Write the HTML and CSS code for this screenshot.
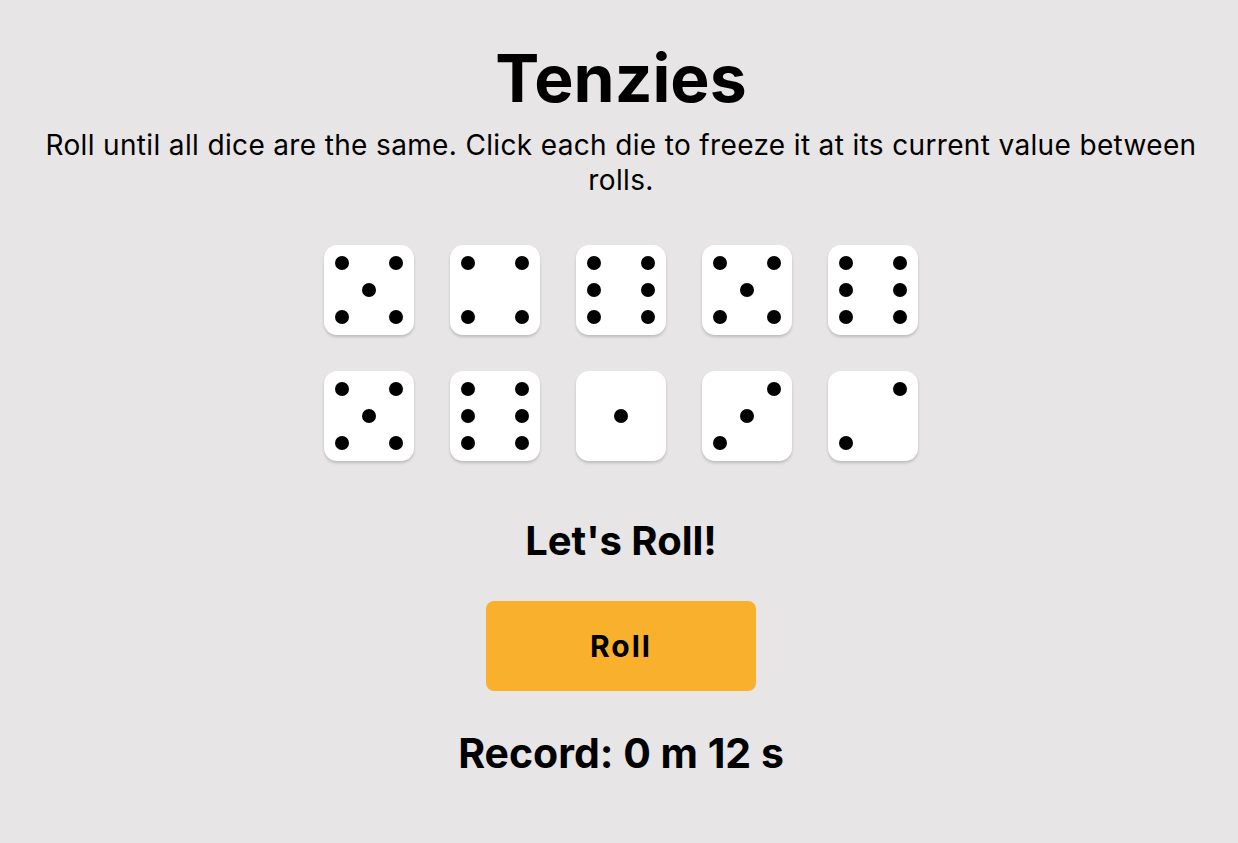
FILE: index.html
```html
<!DOCTYPE html>
<html>
<head>
<meta charset="utf-8">
<link rel="stylesheet" href="styles.css">
</head>
<body>
<main class="app">
  <h1 class="title">Tenzies</h1>
  <p class="instructions">Roll until all dice are the same. Click each die to freeze it at its current value between rolls.</p>
  <div class="dice">
    <div class="die"><span class="pip tl"></span><span class="pip tr"></span><span class="pip c"></span><span class="pip bl"></span><span class="pip br"></span></div>
    <div class="die"><span class="pip tl"></span><span class="pip tr"></span><span class="pip bl"></span><span class="pip br"></span></div>
    <div class="die"><span class="pip tl"></span><span class="pip tr"></span><span class="pip ml"></span><span class="pip mr"></span><span class="pip bl"></span><span class="pip br"></span></div>
    <div class="die"><span class="pip tl"></span><span class="pip tr"></span><span class="pip c"></span><span class="pip bl"></span><span class="pip br"></span></div>
    <div class="die"><span class="pip tl"></span><span class="pip tr"></span><span class="pip ml"></span><span class="pip mr"></span><span class="pip bl"></span><span class="pip br"></span></div>
    <div class="die"><span class="pip tl"></span><span class="pip tr"></span><span class="pip c"></span><span class="pip bl"></span><span class="pip br"></span></div>
    <div class="die"><span class="pip tl"></span><span class="pip tr"></span><span class="pip ml"></span><span class="pip mr"></span><span class="pip bl"></span><span class="pip br"></span></div>
    <div class="die"><span class="pip c"></span></div>
    <div class="die"><span class="pip tr"></span><span class="pip c"></span><span class="pip bl"></span></div>
    <div class="die"><span class="pip tr"></span><span class="pip bl"></span></div>
  </div>
  <h2 class="status">Let's Roll!</h2>
  <button class="roll">Roll</button>
  <h2 class="record">Record: 0 m 12 s</h2>
</main>
</body>
</html>
```
FILE: styles.css
```css
* { box-sizing: border-box; }
html, body { margin: 0; padding: 0; }
body {
  background: #e7e5e6;
  font-family: Inter, "Liberation Sans", sans-serif;
  color: #000;
}
.app {
  display: flex;
  flex-direction: column;
  align-items: center;
  padding: 0 8px 0 12px;
}
.title {
  margin: 38px 0 0;
  font-size: 66px;
  line-height: 80px;
  font-weight: 700;
  letter-spacing: 0;
}
.instructions {
  margin: 10px 0 0;
  font-size: 28px;
  line-height: 35px;
  letter-spacing: 0.35px;
  text-align: center;
  max-width: 1180px;
}
.dice {
  margin-top: 47px;
  display: grid;
  grid-template-columns: repeat(5, 90px);
  gap: 36px;
}
.die {
  width: 90px;
  height: 90px;
  background: #fff;
  border-radius: 13px;
  box-shadow: 0 2px 3px rgba(0,0,0,0.18);
  display: grid;
  grid-template-columns: repeat(3, 14px);
  grid-template-rows: repeat(3, 14px);
  column-gap: 13px;
  row-gap: 13px;
  padding: 11px;
}
.pip {
  width: 14px;
  height: 14px;
  border-radius: 50%;
  background: #000;
}
.tl { grid-area: 1 / 1; }
.tr { grid-area: 1 / 3; }
.ml { grid-area: 2 / 1; }
.c  { grid-area: 2 / 2; }
.mr { grid-area: 2 / 3; }
.bl { grid-area: 3 / 1; }
.br { grid-area: 3 / 3; }
.status {
  margin: 56px 0 0;
  font-size: 40px;
  line-height: 48px;
  font-weight: 700;
}
.roll {
  margin-top: 36px;
  width: 270px;
  height: 90px;
  border: none;
  border-radius: 8px;
  background: #f9b12d;
  font-family: inherit;
  font-size: 30px;
  font-weight: 700;
  letter-spacing: 2px;
  color: #000;
}
.record {
  margin: 37px 0 0;
  font-size: 41px;
  line-height: 50px;
  font-weight: 700;
}
```
